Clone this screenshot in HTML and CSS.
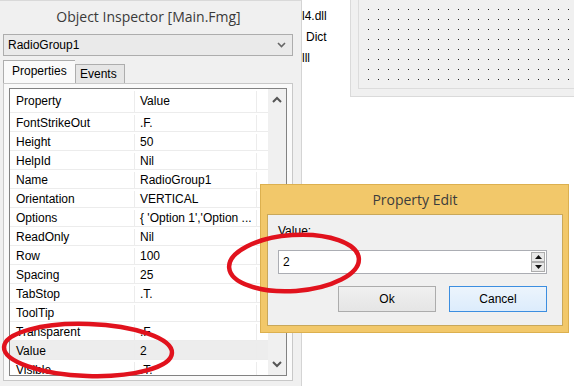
FILE: index.html
```html
<!DOCTYPE html>
<html lang="en">
<head>
<meta charset="UTF-8">
<title>Object Inspector</title>
<link rel="stylesheet" href="styles.css">
</head>
<body>
<div class="desktop">
    <div class="inspector">
        <div class="title">Object Inspector [Main.Fmg]</div>
        <div class="combo">
            <span>RadioGroup1</span>
            <svg width="9" height="6" viewBox="0 0 9 6"><path d="M1 1 L4.5 4.5 L8 1" fill="none" stroke="#666" stroke-width="1.6"/></svg>
        </div>
        <div class="tabs">
            <div class="tab active">Properties</div>
            <div class="tab">Events</div>
        </div>
        <div class="tabpanel">
            <div class="grid">
                <div class="rows">
                    <div class="row head"><div class="c1">Property</div><div class="c2">Value</div><div class="c3"></div></div>
                    <div class="row"><div class="c1">FontStrikeOut</div><div class="c2">.F.</div><div class="c3"></div></div>
                    <div class="row"><div class="c1">Height</div><div class="c2">50</div><div class="c3"></div></div>
                    <div class="row"><div class="c1">HelpId</div><div class="c2">Nil</div><div class="c3"></div></div>
                    <div class="row"><div class="c1">Name</div><div class="c2">RadioGroup1</div><div class="c3"></div></div>
                    <div class="row"><div class="c1">Orientation</div><div class="c2">VERTICAL</div><div class="c3"></div></div>
                    <div class="row"><div class="c1">Options</div><div class="c2">{ 'Option 1','Option ...</div><div class="c3"></div></div>
                    <div class="row"><div class="c1">ReadOnly</div><div class="c2">Nil</div><div class="c3"></div></div>
                    <div class="row"><div class="c1">Row</div><div class="c2">100</div><div class="c3"></div></div>
                    <div class="row"><div class="c1">Spacing</div><div class="c2">25</div><div class="c3"></div></div>
                    <div class="row"><div class="c1">TabStop</div><div class="c2">.T.</div><div class="c3"></div></div>
                    <div class="row"><div class="c1">ToolTip</div><div class="c2"></div><div class="c3"></div></div>
                    <div class="row"><div class="c1">Transparent</div><div class="c2">.F.</div><div class="c3"></div></div>
                    <div class="row selected"><div class="c1">Value</div><div class="c2">2</div><div class="c3"></div></div>
                    <div class="row"><div class="c1">Visible</div><div class="c2">.T.</div><div class="c3"></div></div>
                </div>
                <div class="scroll">
                    <svg width="10" height="7" viewBox="0 0 10 7"><path d="M1 6 L5 2 L9 6" fill="none" stroke="#555" stroke-width="2"/></svg>
                    <svg width="10" height="7" viewBox="0 0 10 7"><path d="M1 1 L5 5 L9 1" fill="none" stroke="#555" stroke-width="2"/></svg>
                </div>
            </div>
        </div>
    </div>
    <div class="files">
        <div class="file">l4.dll</div>
        <div class="file indent">Dict</div>
        <div class="file">lll</div>
    </div>
    <div class="form">
        <div class="form-inner">
            <svg class="dots" width="220" height="90">
                <defs>
                    <pattern id="grid" width="10" height="10" patternUnits="userSpaceOnUse" x="9" y="0">
                        <rect x="0" y="9" width="1" height="1" fill="#222"/>
                    </pattern>
                </defs>
                <rect width="220" height="90" fill="url(#grid)"/>
            </svg>
        </div>
    </div>
</div>

<div class="dialog">
    <div class="dialog-title">Property Edit</div>
    <div class="dialog-body">
        <div class="label">Value:</div>
        <div class="spin">
            <span>2</span>
            <div class="spin-btns">
                <div class="spin-btn"><svg width="7" height="4" viewBox="0 0 7 4"><path d="M0 4 L3.5 0 L7 4 Z" fill="#111"/></svg></div>
                <div class="spin-btn"><svg width="7" height="4" viewBox="0 0 7 4"><path d="M0 0 L3.5 4 L7 0 Z" fill="#111"/></svg></div>
            </div>
        </div>
        <div class="actions">
            <button class="btn">Ok</button>
            <button class="btn default">Cancel</button>
        </div>
    </div>
</div>

<svg class="marks" width="574" height="386">
    <ellipse cx="294" cy="263" rx="65" ry="28" transform="rotate(-4 294 263)" fill="none" stroke="#e1121d" stroke-width="4.5"/>
    <ellipse cx="88" cy="350" rx="84" ry="26" transform="rotate(2 88 350)" fill="none" stroke="#e1121d" stroke-width="4.5"/>
</svg>
</body>
</html>
```

FILE: styles.css
```css
* {
    box-sizing: border-box;
}
body {
    margin: 0;
    font-family: "Liberation Sans", Arial, sans-serif;
    font-size: 12px;
    color: #000;
    background: #fff;
    width: 574px;
    height: 386px;
    overflow: hidden;
    position: relative;
}
.desktop {
    display: flex;
    height: 386px;
}
.inspector {
    width: 302px;
    flex: none;
    background: #f0f0f0;
    border-right: 1px solid #d4d4d4;
    border-top: 1px solid #d9d9d9;
}
.title {
    height: 33px;
    line-height: 32px;
    text-align: center;
    font-family: "Open Sans", sans-serif;
    font-size: 14px;
    color: #3a3a3a;
    padding-right: 4px;
}
.combo {
    margin-left: 3px;
    width: 290px;
    height: 22px;
    border: 1px solid #adadad;
    background: #eaeaea;
    display: flex;
    align-items: center;
    justify-content: space-between;
    padding: 0 6px 0 4px;
}
.tabs {
    display: flex;
    align-items: flex-end;
    margin: 4px 0 0 3px;
    height: 23px;
}
.tab {
    height: 19px;
    line-height: 18px;
    padding: 0 7px 0 4px;
    border: 1px solid #adadad;
    border-bottom: none;
    background: #e6e6e6;
}
.tab.active {
    height: 23px;
    line-height: 20px;
    width: 72px;
    padding: 0 0 0 8px;
    background: #fafafa;
    border-right: none;
}
.tabpanel {
    margin-left: 3px;
    width: 290px;
    height: 298px;
    border: 1px solid #c8c8c8;
    background: #fafafa;
    padding: 4px 0 0 5px;
}
.grid {
    width: 278px;
    height: 288px;
    border: 1px solid #828282;
    background: #fff;
    display: flex;
    overflow: hidden;
}
.rows {
    width: 258px;
    flex: none;
}
.row {
    display: flex;
    height: 19px;
    line-height: 17px;
    padding-top: 2px;
    border-bottom: 1px solid #ececec;
}
.row.head {
    height: 24px;
    line-height: 21px;
    padding-top: 2px;
}
.row.selected {
    background: #ededed;
}
.c1 {
    width: 125px;
    padding-left: 6px;
    border-right: 1px solid #ececec;
}
.c2 {
    width: 122px;
    padding-left: 5px;
    border-right: 1px solid #ececec;
    white-space: nowrap;
    overflow: hidden;
}
.c3 {
    flex: 1;
}
.scroll {
    width: 18px;
    background: #f0f0f0;
    display: flex;
    flex-direction: column;
    align-items: center;
    justify-content: space-between;
    padding: 7px 0 7px 0;
    height: 286px;
}
.files {
    width: 48px;
    flex: none;
    padding-top: 9px;
    font-size: 12px;
}
.file {
    height: 21px;
    line-height: 14px;
}
.file.indent {
    padding-left: 4px;
}
.form {
    flex: 1;
    height: 97px;
    border-left: 1px solid #dadada;
    border-bottom: 1px solid #dadada;
    background: #f0f0f0;
    padding: 0 0 7px 7px;
}
.form-inner {
    height: 89px;
    border-left: 1px solid #dcdcdc;
    border-bottom: 1px solid #dcdcdc;
    overflow: hidden;
}
.dots {
    display: block;
}
.dialog {
    position: absolute;
    left: 260px;
    top: 184px;
    width: 309px;
    height: 149px;
    background: #f2c86a;
    border: 1px solid #dcb04f;
    padding: 0 5px 6px 6px;
    display: flex;
    flex-direction: column;
}
.dialog-title {
    height: 29px;
    line-height: 30px;
    text-align: center;
    font-family: "Open Sans", sans-serif;
    font-size: 14px;
    color: #3c3c3c;
}
.dialog-body {
    flex: 1;
    background: #f0f0f0;
    border: 1px solid #c9a85a;
    padding: 9px 15px 0 10px;
}
.label {
    height: 16px;
    line-height: 14px;
}
.spin {
    margin-top: 10px;
    height: 24px;
    border: 1px solid #abadb3;
    background: #fff;
    display: flex;
    align-items: center;
    justify-content: space-between;
    padding-left: 4px;
}
.spin-btns {
    display: flex;
    flex-direction: column;
    margin-right: 1px;
}
.spin-btn {
    width: 14px;
    height: 10px;
    border: 1px solid #acacac;
    background: #e8e8e8;
    display: flex;
    align-items: center;
    justify-content: center;
}
.actions {
    display: flex;
    justify-content: flex-end;
    gap: 13px;
    margin-top: 12px;
}
.btn {
    width: 98px;
    height: 26px;
    font-family: "Liberation Sans", Arial, sans-serif;
    font-size: 12px;
    color: #000;
    border: 1px solid #acacac;
    background: linear-gradient(#f0f0f0, #e5e5e5);
    padding: 0;
}
.btn.default {
    border-color: #3c8ee0;
    background: linear-gradient(#ecf4fc, #dcecfc);
}
.marks {
    position: absolute;
    left: 0;
    top: 0;
    pointer-events: none;
}
```
